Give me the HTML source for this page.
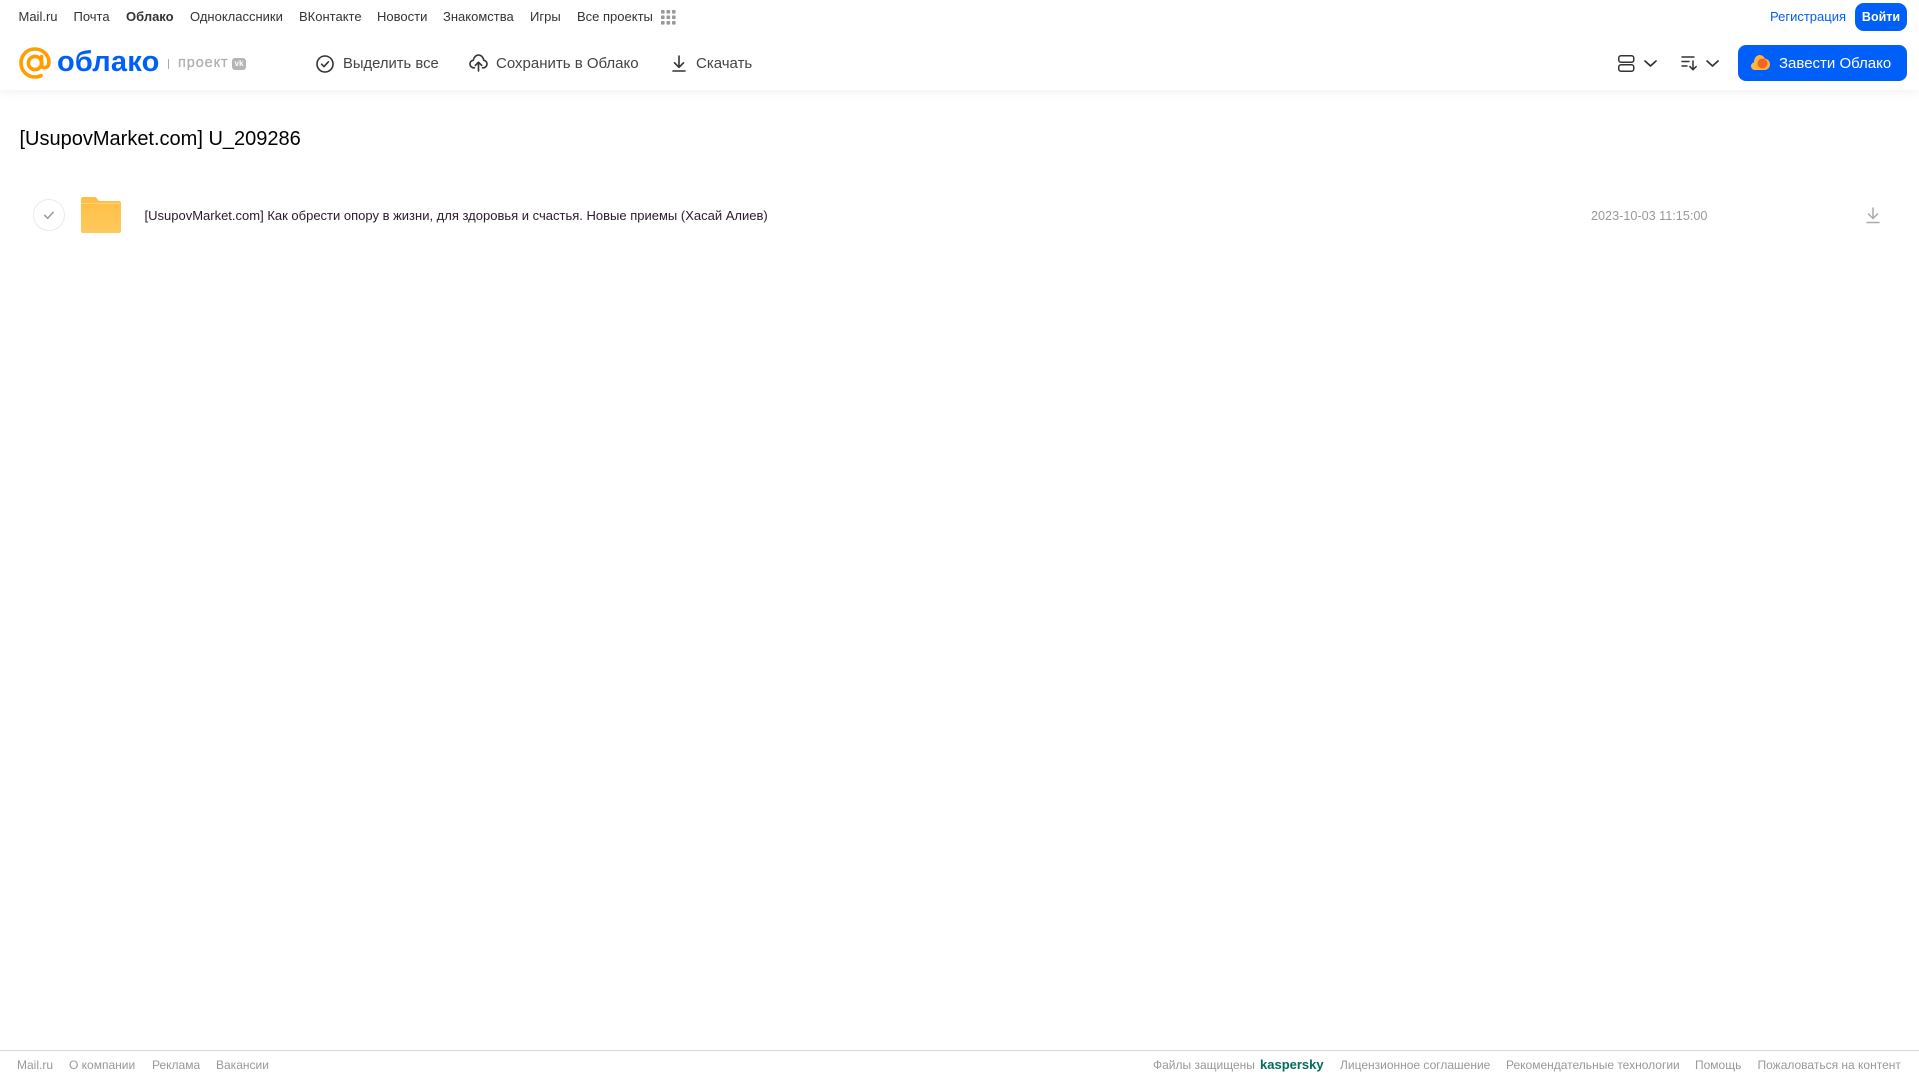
<!DOCTYPE html>
<html lang="ru"><head><meta charset="utf-8"><title>Облако</title>
<style>
html,body{margin:0;padding:0;background:#fff;width:1919px;height:1079px;overflow:hidden}
body{position:relative;font-family:"Liberation Sans",Arial,sans-serif}
.t{position:absolute;white-space:nowrap;line-height:16px}
.n{top:9px;font-size:13px;color:#333}
.a{top:55.500px;font-size:14.800px;color:#444}
.f{top:1057px;font-size:12px;color:#999}
svg{position:absolute;overflow:visible}
#h{position:absolute;left:0;top:0;width:1919px;height:90px;background:#fff;box-shadow:0 1px 10px rgba(0,0,0,.07)}
#fl{position:absolute;left:0;top:1050px;width:1919px;height:1px;background:#d8d8d8}
.b{position:absolute;background:#005ff9}
</style></head><body>
<div id="h"></div>
<span class="t n" style="left:18.500px">Mail.ru</span>
<span class="t n" style="left:73.500px">Почта</span>
<span class="t n" style="left:126px;font-weight:bold">Облако</span>
<span class="t n" style="left:190px">Одноклассники</span>
<span class="t n" style="left:299px">ВКонтакте</span>
<span class="t n" style="left:377px">Новости</span>
<span class="t n" style="left:443px">Знакомства</span>
<span class="t n" style="left:530px">Игры</span>
<span class="t n" style="left:577px">Все проекты</span>
<svg style="left:661px;top:10px" width="15" height="15" fill="#999"><rect x="0" y="0" width="3.600" height="3.600" rx=".8"/><rect x="5.500" y="0" width="3.600" height="3.600" rx=".8"/><rect x="11" y="0" width="3.600" height="3.600" rx=".8"/><rect x="0" y="5.500" width="3.600" height="3.600" rx=".8"/><rect x="5.500" y="5.500" width="3.600" height="3.600" rx=".8"/><rect x="11" y="5.500" width="3.600" height="3.600" rx=".8"/><rect x="0" y="11" width="3.600" height="3.600" rx=".8"/><rect x="5.500" y="11" width="3.600" height="3.600" rx=".8"/><rect x="11" y="11" width="3.600" height="3.600" rx=".8"/></svg>
<span class="t n" style="left:1770px;color:#005ff9">Регистрация</span>
<div class="b" style="left:1855px;top:3px;width:52px;height:28px;border-radius:9px"></div>
<span class="t n" style="left:1855px;width:52px;text-align:center;color:#fff;font-weight:bold;font-size:12.500px">Войти</span>

<svg style="left:19px;top:47px" width="32" height="32" viewBox="0 0 32 32" fill="none" stroke="#ff9e00" stroke-width="3.600" stroke-linecap="round"><circle cx="16" cy="16" r="6.600"/><path d="M22.600 9.500v8.500c0 3.400 5.600 3.600 7-.2 1.800-7.600-4.400-15.800-13.600-15.800C8 2 2 8.300 2 16s6 14 14 14c2.400 0 4.300-.5 6-1.400"/></svg>
<span class="t" style="left:57px;top:44px;line-height:36px;font-size:29px;font-weight:bold;color:#005ff9;letter-spacing:.2px">облако</span>
<div style="position:absolute;left:168px;top:59px;width:1px;height:10px;background:#aaa"></div>
<span class="t" style="left:178px;top:55px;font-size:14.500px;color:#b0b0b0;letter-spacing:.9px;-webkit-text-stroke:.3px #b0b0b0">проект</span>
<div style="position:absolute;left:232px;top:58px;width:14px;height:12px;border-radius:3px;background:#b5b5b5;color:#fff;font-size:8px;font-weight:bold;line-height:12px;text-align:center">vk</div>

<svg style="left:316px;top:54.500px" width="18" height="18" fill="none" stroke="#333" stroke-width="1.600" stroke-linecap="round" stroke-linejoin="round"><circle cx="9" cy="9" r="8"/><path d="M5.600 9.200l2.400 2.400 4.400-4.800"/></svg>
<span class="t a" style="left:343px">Выделить все</span>
<svg style="left:469px;top:54px" width="19" height="18" viewBox="0 0 19 18" fill="none" stroke="#333" stroke-width="1.600" stroke-linecap="round" stroke-linejoin="round"><path d="M5.500 13.800H4.800C2.700 13.800 1 12.100 1 10c0-1.900 1.300-3.400 3.200-3.700C4.900 3.200 7 1 9.500 1c2.600 0 4.700 2.200 5.300 5.300 1.900.3 3.200 1.800 3.200 3.700 0 2.100-1.700 3.800-3.800 3.800h-.7"/><path d="M9.500 17V8.500M6.300 11.400l3.200-3.200 3.200 3.200"/></svg>
<span class="t a" style="left:496px;font-size:15px">Сохранить в Облако</span>
<svg style="left:672px;top:55px" width="14" height="17" fill="none" stroke="#333" stroke-width="1.600" stroke-linecap="round" stroke-linejoin="round"><path d="M7 1v11M2.500 7.800L7 12.300l4.500-4.500M1 16h12"/></svg>
<span class="t a" style="left:696px;font-size:15px">Скачать</span>

<svg style="left:1618px;top:55px" width="17" height="17" fill="none" stroke="#333" stroke-width="1.500"><rect x=".75" y=".75" width="15" height="6.500" rx="2.200"/><rect x=".75" y="9.750" width="15" height="6.500" rx="2.200"/></svg>
<svg style="left:1644px;top:60px" width="13" height="7" fill="none" stroke="#333" stroke-width="1.700" stroke-linecap="round" stroke-linejoin="round"><path d="M1 1l5.500 5L12 1"/></svg>
<svg style="left:1681px;top:56px" width="17" height="15" fill="none" stroke="#333" stroke-width="1.400" stroke-linecap="round" stroke-linejoin="round"><path d="M1 1h12M1 5.500h7M1 10h5"/><path d="M12 5v8.500M8.800 10.500l3.200 3.200 3.200-3.200" stroke-width="1.500"/></svg>
<svg style="left:1706px;top:60px" width="13" height="7" fill="none" stroke="#333" stroke-width="1.700" stroke-linecap="round" stroke-linejoin="round"><path d="M1 1l5.500 5L12 1"/></svg>

<div class="b" style="left:1738px;top:45px;width:169px;height:36px;border-radius:8px"></div>
<svg style="left:1751px;top:55px" width="19" height="15" viewBox="0 0 19 15"><path d="M4 15C1.800 15 0 13.300 0 11.100 0 9.300 1.200 7.800 2.900 7.400 3 3.300 5.700 0 8.700 0c2.400 0 4.200 1.500 5 3.500C16.700 3.800 19 6.200 19 9.200c0 3.200-2.500 5.800-5.600 5.800z" fill="#ffb340"/><circle cx="11.500" cy="8.500" r="5" fill="#f2661f"/></svg>
<span class="t a" style="left:1779px;color:#fff;font-size:15px">Завести Облако</span>

<span class="t" style="left:19.500px;top:125px;line-height:28px;font-size:20px;color:#000">[UsupovMarket.com] U_209286</span>

<svg style="left:33px;top:199px" width="32" height="32" fill="none"><circle cx="16" cy="16" r="15.500" stroke="#ebebeb"/><path d="M11.700 16.300l3 3 5.500-6" stroke="#999" stroke-width="1.500" stroke-linecap="round" stroke-linejoin="round"/></svg>
<svg style="left:81px;top:197px" width="40" height="36" viewBox="0 0 40 36"><defs><linearGradient id="g" x1="0" y1="0" x2="0" y2="1"><stop offset="0" stop-color="#ffbe43"/><stop offset="1" stop-color="#ffc95e"/></linearGradient></defs><path d="M2 0h11c2 0 3 1 4 3l1 1h20c1.200 0 2 .8 2 2v28c0 1.200-.8 2-2 2H2c-1.200 0-2-.8-2-2V2C0 .8.800 0 2 0z" fill="url(#g)"/><path d="M0 6.500h40" stroke="#ffd27a" stroke-width="1"/></svg>
<span class="t" style="left:144.500px;top:208px;font-size:13px;color:#2b1a2b">[UsupovMarket.com] Как обрести опору в жизни, для здоровья и счастья. Новые приемы (Хасай Алиев)</span>
<span class="t" style="left:1591px;top:207.500px;font-size:12.650px;color:#999">2023-10-03 11:15:00</span>
<svg style="left:1866px;top:207px" width="14" height="17" fill="none" stroke="#aaa" stroke-width="1.500" stroke-linecap="round" stroke-linejoin="round"><path d="M7 1v10.500M2.500 7L7 11.500 11.500 7M1 15.500h12"/></svg>

<div id="fl"></div>
<span class="t f" style="left:17px">Mail.ru</span>
<span class="t f" style="left:69px">О компании</span>
<span class="t f" style="left:152px">Реклама</span>
<span class="t f" style="left:216px">Вакансии</span>
<span class="t f" style="left:1153px">Файлы защищены</span>
<span class="t f" style="left:1260px;color:#006d5c;font-weight:bold;font-size:13px">kaspersky</span>
<span class="t f" style="left:1340px">Лицензионное соглашение</span>
<span class="t f" style="left:1506px">Рекомендательные технологии</span>
<span class="t f" style="left:1695px">Помощь</span>
<span class="t f" style="left:1757.500px">Пожаловаться на контент</span>
</body></html>
